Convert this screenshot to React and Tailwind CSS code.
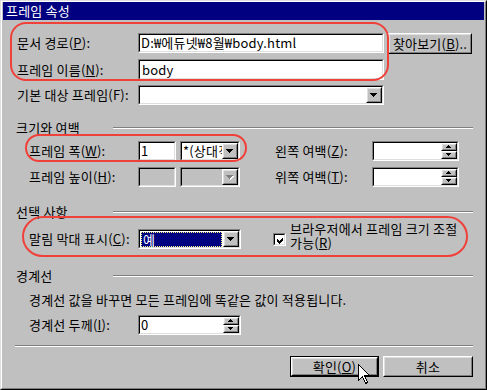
const FONT = "font-['Noto_Sans_CJK_KR','Liberation_Sans',sans-serif]";

function U({ children }) {
  return <span className="underline underline-offset-1">{children}</span>;
}

function Sunken({ className = "", inner = "bg-white", children }) {
  return (
    <div className={`border border-t-[#808080] border-l-[#808080] border-r-white border-b-white ${className}`}>
      <div className={`h-full border border-t-black border-l-black border-r-[#dfdfdf] border-b-[#dfdfdf] flex overflow-hidden ${inner}`}>
        {children}
      </div>
    </div>
  );
}

function Raised({ className = "", children }) {
  return (
    <div className={`border border-t-white border-l-white border-r-black border-b-black bg-[#c0c0c0] ${className}`}>
      <div className="h-full border border-t-[#dfdfdf] border-l-[#dfdfdf] border-r-[#808080] border-b-[#808080] flex items-center justify-center">
        {children}
      </div>
    </div>
  );
}

function Arrow({ up, small, disabled }) {
  const rows = small ? [[0, 5], [1, 3], [2, 1]] : [[0, 7], [1, 5], [2, 3], [3, 1]];
  const w = small ? 5 : 7;
  const h = rows.length;
  const fill = disabled ? "#808080" : "#000";
  return (
    <svg width={w + 1} height={h + 1} shapeRendering="crispEdges">
      {disabled &&
        rows.map(([i, len]) => (
          <rect key={"s" + i} x={i + 1} y={(up ? h - 1 - i : i) + 1} width={len} height={1} fill="#fff" />
        ))}
      {rows.map(([i, len]) => (
        <rect key={i} x={i} y={up ? h - 1 - i : i} width={len} height={1} fill={fill} />
      ))}
    </svg>
  );
}

function Select({ w, text, disabled, selected }) {
  return (
    <Sunken className={`${w} h-5`} inner={disabled ? "bg-[#c0c0c0]" : "bg-white"}>
      <div className="flex-1 min-w-0 flex items-center whitespace-nowrap overflow-hidden">
        {selected ? (
          <div className="flex-1 h-[15px] ml-px mr-px bg-[#000080] text-white outline outline-1 outline-dotted outline-[#ffff80] -outline-offset-1 leading-[15px] pl-[2px]">
            {text}
          </div>
        ) : (
          <span className="pl-px">{text}</span>
        )}
      </div>
      <Raised className="w-4 h-4 shrink-0">
        <Arrow disabled={disabled} />
      </Raised>
    </Sunken>
  );
}

function Spin({ w, value }) {
  return (
    <Sunken className={`${w} h-5`}>
      <div className="flex-1 flex items-center pl-px">{value}</div>
      <div className="flex flex-col w-4 shrink-0">
        <Raised className="w-4 h-2">
          <Arrow up small />
        </Raised>
        <Raised className="w-4 h-2">
          <Arrow small />
        </Raised>
      </div>
    </Sunken>
  );
}

function Heading({ children }) {
  return (
    <div className="flex items-center h-[14px] -ml-px">
      <div className="w-[97px]">{children}</div>
      <div className="flex-1 h-[2px] border-t border-t-[#808080] border-b border-b-white" />
    </div>
  );
}

function Cursor() {
  return (
    <svg width="13" height="21" className="absolute left-[358px] top-[364px]" shapeRendering="crispEdges">
      <path
        d="M0.5 0.5 L0.5 16.5 L4.5 12.5 L7.5 19.5 L9.5 18.5 L6.5 11.5 L11.5 11.5 Z"
        fill="#fff"
        stroke="#000"
        strokeWidth="1"
      />
    </svg>
  );
}

export default function App() {
  return (
    <div className={`w-[487px] h-[390px] bg-[#c0c0c0] text-black text-[13px] leading-[14px] tracking-[0.2px] relative overflow-hidden ${FONT}`}>
      <div className="w-full h-full border border-t-[#dfdfdf] border-l-[#dfdfdf] border-r-black border-b-black">
        <div className="h-full border border-t-white border-l-white border-r-[#808080] border-b-[#808080] flex flex-col">
          <div className="h-[18px] mx-px bg-[#000080] text-white text-[13px] pl-[3px] flex items-center">프레임 속성</div>

          <div className="flex flex-col pl-[15px] pr-[12px]">
            <div className="flex items-center mt-[12px]">
              <div className="w-[121px]">문서 경로(<U>P</U>):</div>
              <Sunken className="w-[246px] h-5">
                <span className="pl-px self-center whitespace-nowrap">D:₩에듀넷₩8월₩body.html</span>
              </Sunken>
              <Raised className="ml-[4px] w-[84px] h-[21px] self-start mt-px">
                <span className="whitespace-nowrap">찾아보기(<U>B</U>)..</span>
              </Raised>
            </div>
            <div className="flex items-center mt-[5px]">
              <div className="w-[121px]">프레임 이름(<U>N</U>):</div>
              <Sunken className="w-[246px] h-[21px]">
                <span className="pl-[2px] self-center">body</span>
              </Sunken>
            </div>
            <div className="flex items-center mt-[5px]">
              <div className="w-[121px]">기본 대상 프레임(F):</div>
              <Select w="w-[246px]" text="" />
            </div>

            <div className="mt-[16px]">
              <Heading>크기와 여백</Heading>
            </div>
            <div className="flex items-center mt-[6px] pl-[12px]">
              <div className="w-[109px]">프레임 폭(<U>W</U>):</div>
              <Sunken className="w-[38px] h-5">
                <span className="pl-px self-center">1</span>
              </Sunken>
              <div className="ml-[4px]">
                <Select w="w-[60px]" text="*(상대적)" />
              </div>
              <div className="ml-[35px] w-[97px]">왼쪽 여백(<U>Z</U>):</div>
              <Spin w="w-[87px]" value="" />
            </div>
            <div className="flex items-center mt-[6px] pl-[12px]">
              <div className="w-[109px]">프레임 높이(<U>H</U>):</div>
              <Sunken className="w-[38px] h-5" inner="bg-[#c0c0c0]" />
              <div className="ml-[4px]">
                <Select w="w-[60px]" text="" disabled />
              </div>
              <div className="ml-[35px] w-[97px]">위쪽 여백(<U>T</U>):</div>
              <Spin w="w-[87px]" value="" />
            </div>

            <div className="mt-[18px]">
              <Heading>선택 사항</Heading>
            </div>
            <div className="flex items-center mt-[10px] pl-[12px] h-5">
              <div className="w-[109px] whitespace-nowrap">말림 막대 표시(<U>C</U>):</div>
              <Select w="w-[103px]" text="예" selected />
              <Sunken className="ml-[32px] w-[13px] h-[13px]">
                <svg width="9" height="9" className="m-px" shapeRendering="crispEdges">
                  <path d="M1 3h1v1h1v1h1V4h1V3h1V2h1v3H6v1H5v1H4v1H3V7H2V6H1Z" fill="#000" />
                </svg>
              </Sunken>
              <div className="ml-[4px] leading-[14px] -mt-[6px] whitespace-nowrap">
                <div>브라우저에서 프레임 크기 조절</div>
                <div>가능(<U>R</U>)</div>
              </div>
            </div>

            <div className="mt-[20px]">
              <Heading>경계선</Heading>
            </div>
            <div className="mt-[10px] pl-[12px] h-[14px] whitespace-nowrap">
              경계선 값을 바꾸면 모든 프레임에 똑같은 값이 적용됩니다.
            </div>
            <div className="flex items-center mt-[8px] pl-[12px]">
              <div className="w-[109px]">경계선 두께(<U>I</U>):</div>
              <Spin w="w-[103px]" value="0" />
            </div>

            <div className="mt-[10px] -ml-[2px] h-[2px] border-t border-t-[#808080] border-b border-b-white" />

            <div className="flex justify-end gap-[4px] mt-[9px]">
              <div className="w-[89px] h-[21px] border border-black">
                <Raised className="h-full">
                  <span>확인(<U>O</U>)</span>
                </Raised>
              </div>
              <Raised className="w-[90px] h-[21px]">
                <span>취소</span>
              </Raised>
            </div>
          </div>
        </div>
      </div>

      <div className="absolute left-[10px] top-[22px] w-[379px] h-[59px] border-2 border-[#f0403a] rounded-[16px]" />
      <div className="absolute left-[25px] top-[134px] w-[222px] h-[28px] border-2 border-[#f0403a] rounded-full" />
      <div className="absolute left-[22px] top-[216px] w-[446px] h-[41px] border-2 border-[#f0403a] rounded-full" />
      <Cursor />
    </div>
  );
}
